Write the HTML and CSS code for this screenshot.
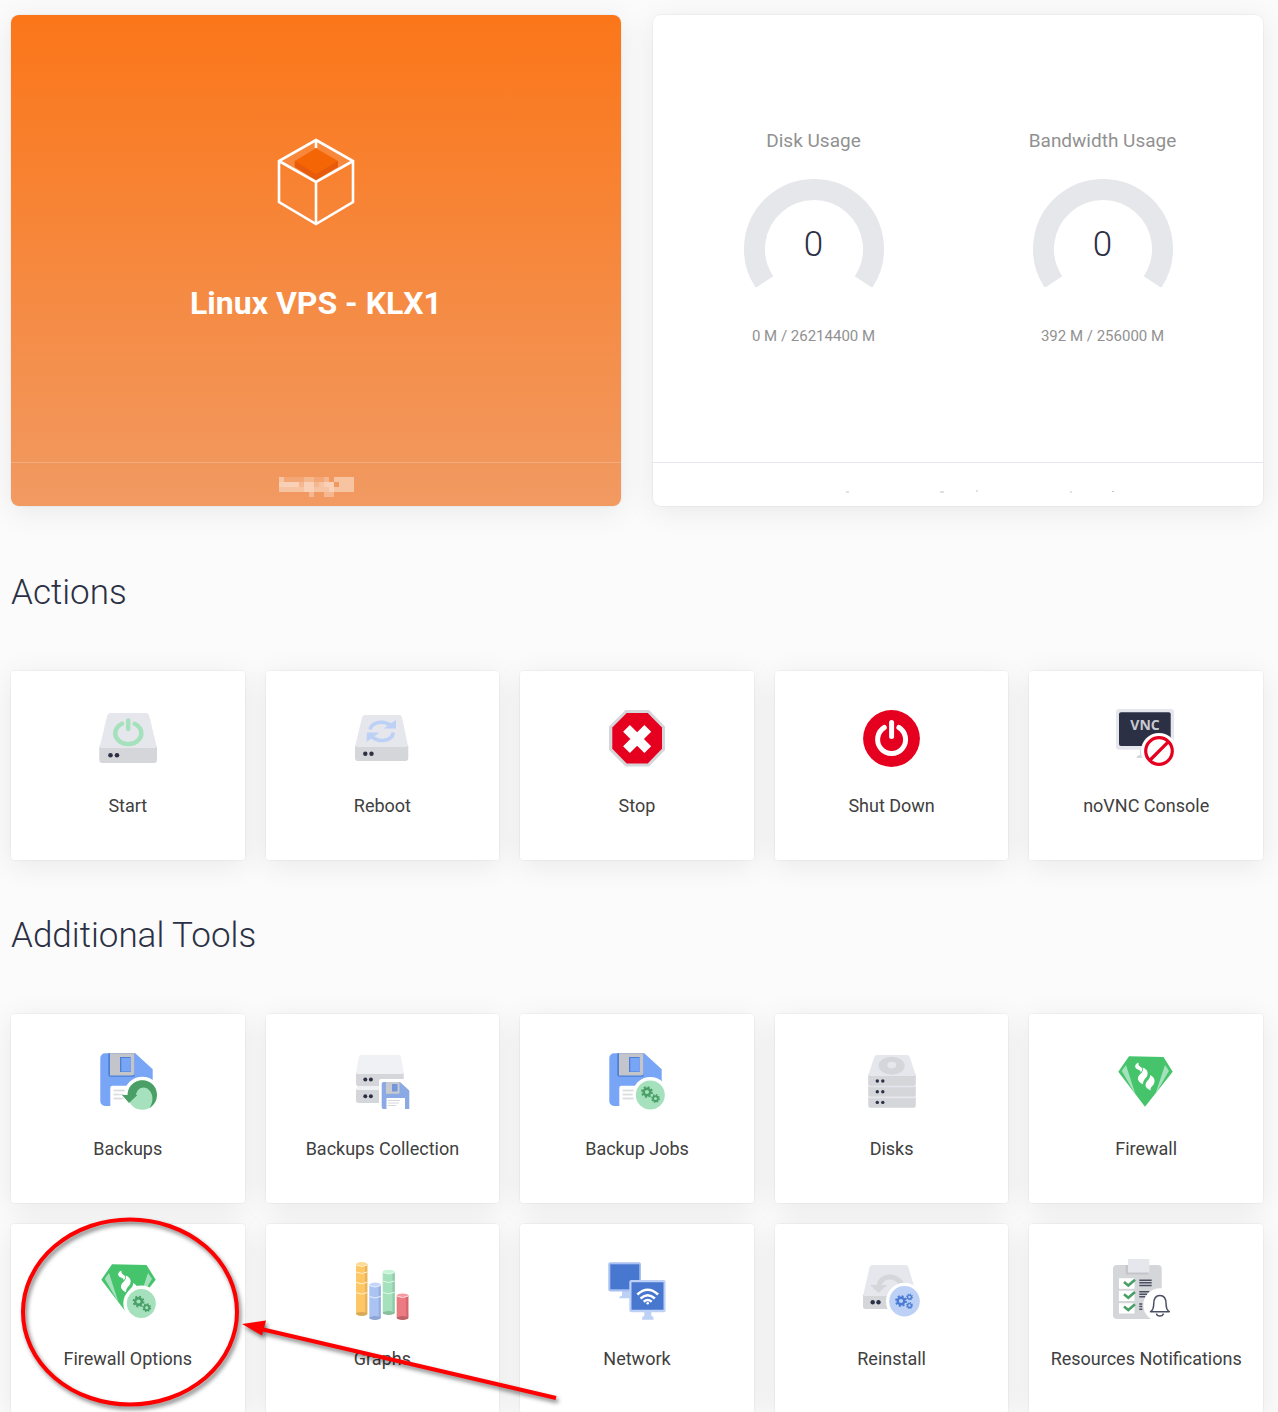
FILE: index.html
```
<!DOCTYPE html>
<html lang="en">
<head>
    <meta charset="utf-8">
    <meta name="viewport" content="width=device-width, initial-scale=1">
    <title>Linux VPS - KLX1</title>
    <link rel="stylesheet" href="styles.css">
</head>
<body>
    <!-- shared icon parts -->
    <svg class="defs" width="0" height="0" aria-hidden="true">
        <symbol id="gear" viewBox="-6 -6 12 12" overflow="visible">
            <circle r="3.3" fill="none" stroke="currentColor" stroke-width="2.4"/>
            <circle r="5" fill="none" stroke="currentColor" stroke-width="1.8" stroke-dasharray="2 1.927"/>
        </symbol>
        <symbol id="floppy" viewBox="0 0 64 64">
            <path fill="#78a5f6" d="M9 4.300h30.300l17.400 16V57H9a4.700 4.700 0 0 1-4.700-4.700V9A4.700 4.700 0 0 1 9 4.300z"/>
            <path fill="#4d7fd6" d="M12.300 4.300h26v23.400h-24a2 2 0 0 1-2-2z"/>
            <path fill="#c4c5cb" d="M14 4.300h24.300V24a2.500 2.500 0 0 1-2.500 2.500H14z"/>
            <path fill="#4d7fd6" d="M24 8h10.700v15H24z"/>
            <path fill="#78a5f6" d="M25.300 9h9.400v13.500h-9.400z"/>
            <path fill="#fff" d="M16.300 36.700H60V60H14.300V38.700a2 2 0 0 1 2-2z"/>
            <path stroke="#dcdde0" stroke-width="1.400" d="M17.700 41.500h12M17.700 45.500h10M17.700 49.500h10"/>
        </symbol>
        <symbol id="diamond" viewBox="0 0 64 64">
            <path fill="#45c46c" d="M15 7.300L49.500 8l9.200 14.700L31 57.700 4.300 22.700z"/>
            <path fill="#a5e1bc" d="M12 16l-4.300 5.700L21.700 46zM51 16l4 5.700L41 46z"/>
            <g fill="#fff">
                <path d="M24.500 13.500c-4.500 2-4.500 6 .5 7.500 1.500.5 1.800 1.500 1.500 2.500 3-3 1.500-5-.5-6-2-1.200-1.500-2.500-1.500-4z"/>
                <path d="M28.500 18.500c1.500 3-1 5.500-3.500 8-2.500 3.200-.5 6.800 4 8.800 0-2.300.5-3.800 2.500-6 3.500-3.500 3-9-3-10.800z"/>
                <path d="M36 26c.5 2.500-1 4-3 6.200-2 2.400-2 5 0 7 1.500 1 2.600 1.500 3.500 2.300-.2-2 .4-3 1.800-4.500 4-4 2.500-9-2.300-11z"/>
            </g>
        </symbol>
    </svg>

    <main class="page">
        <section class="overview">
            <div class="card card-product">
                <div class="card-body">
                    <svg class="cube" viewBox="0 0 80 90" aria-hidden="true">
                        <path fill="#fff" fill-opacity=".06" d="M40 3l38 21-38 20.700L4 24z"/>
                        <path fill="#e85a0c" d="M18.700 24v6L40 43.300 62 30v-6z"/>
                        <path fill="#f46506" d="M40 11.300L62 24 40 37.300 18.700 24z"/>
                        <path fill="none" stroke="#fff" stroke-width="2.600" d="M40 3l37 21v41L40 87 3 65V24zM3 24l37 21 37-21M40 45v42M40 3v8"/>
                    </svg>
                    <h1>Linux VPS - KLX1</h1>
                </div>
                <div class="card-footer">
                    <svg class="masked-name" viewBox="0 0 75 20" role="img" aria-label="Hidden host name">
                        <g fill="#fff">
                            <path fill-opacity=".15" d="M5 0h20v5H5zM35 0h5v5h-5zM40 0h5v5h-5z"/>
                            <path fill-opacity=".3" d="M25 0h10v5H25zM20 5h5v5h-5zM35 5h5v5h-5zM30 15h5v5h-5zM45 15h10v5H45zM45 0h5v5h-5z"/>
                            <path fill-opacity=".42" d="M0 0h5v5H0zM55 0h20v5H55zM60 5h15v5H60zM0 10h25v5H0zM35 10h15v5H35zM55 10h20v5H55zM40 5h5v5h-5z"/>
                            <path fill-opacity=".55" d="M0 5h20v5H0zM25 5h10v5H25zM45 5h10v5H45zM25 10h10v5H25zM50 10h5v5h-5z"/>
                        </g>
                    </svg>
                </div>
            </div>

            <div class="card card-usage">
                <div class="card-body">
                    <div class="usage">
                        <h3>Disk Usage</h3>
                        <div class="gauge">
                            <svg viewBox="0 0 140 108" aria-hidden="true"><path d="M20.500 103A59.500 59.500 0 1 1 119.500 103"/></svg>
                            <span>0</span>
                        </div>
                        <p>0 M / 26214400 M</p>
                    </div>
                    <div class="usage">
                        <h3>Bandwidth Usage</h3>
                        <div class="gauge">
                            <svg viewBox="0 0 140 108" aria-hidden="true"><path d="M20.500 103A59.500 59.500 0 1 1 119.500 103"/></svg>
                            <span>0</span>
                        </div>
                        <p>392 M / 256000 M</p>
                    </div>
                </div>
                <div class="card-footer">
                    <svg class="masked-date" viewBox="0 0 270 4" aria-hidden="true">
                        <path stroke="#c4c4c4" d="M1 2h3M95 2h4M131 1h2M225 2h2M267 1.500h2"/>
                    </svg>
                </div>
            </div>
        </section>

        <h2>Actions</h2>
        <section class="tiles">
            <a class="tile" href="#start">
                <svg viewBox="0 0 64 64" aria-hidden="true">
                    <path fill="#e6e7ec" d="M14.500 7h35.500q2.500 0 3.200 2.500L61 42H3.300l8-32.500Q12 7 14.500 7z"/>
                    <path fill="#d5d6da" d="M3.300 40.500q1 1.500 2.500 1.500h52.700q1.500 0 2.500-1.500V54a3 3 0 0 1-3 3H6.300a3 3 0 0 1-3-3z"/>
                    <circle cx="14.500" cy="49.200" r="2.300" fill="#2b3044"/><circle cx="21" cy="49.200" r="2.300" fill="#2b3044"/>
                    <path fill="none" stroke="#a5e1bc" stroke-width="4.500" stroke-linecap="round" d="M26 17.800a13 10.800 0 1 0 12.600 0M32.200 14.500v8.500"/>
                </svg>
                <span>Start</span>
            </a>
            <a class="tile" href="#reboot">
                <svg viewBox="0 0 64 64" aria-hidden="true">
                    <path fill="#e6e7ec" d="M15 9h34q2.400 0 3 2.400l6.300 29.600H5l7-29.600Q12.600 9 15 9z"/>
                    <path fill="#d5d6da" d="M5 39.500q1 1.500 2.500 1.500h48.300q1.500 0 2.500-1.500V52a3 3 0 0 1-3 3H8a3 3 0 0 1-3-3z"/>
                    <circle cx="15.300" cy="47.700" r="2.200" fill="#2b3044"/><circle cx="21.500" cy="47.700" r="2.200" fill="#2b3044"/>
                    <path fill="none" stroke="#bdd0f5" stroke-width="3.600" d="M20 23.500c2-8 14-9.500 21-4M43.500 26.500c-2 9-14 10.500-22 4"/>
                    <path fill="#bdd0f5" d="M46 14v8.500H33.500zM17 26.500h12.500L16.500 36z"/>
                </svg>
                <span>Reboot</span>
            </a>
            <a class="tile" href="#stop">
                <svg viewBox="0 0 64 64" aria-hidden="true">
                    <path fill="#d5d6da" d="M20.500 4h23.500L60 20.500v23.500L44 60.500H20.500L4 44V20.500z"/>
                    <path fill="#e5001f" d="M21.700 7h21L57 21.500v21.300L42.700 57.500h-21L7.300 42.800V21.500z"/>
                    <path stroke="#fff" stroke-width="9.600" d="M21.500 22.300l21.300 21.300M42.800 22.300L21.500 43.600"/>
                </svg>
                <span>Stop</span>
            </a>
            <a class="tile" href="#shutdown">
                <svg viewBox="0 0 64 64" aria-hidden="true">
                    <circle cx="31.500" cy="32.500" r="28.400" fill="#e5001f"/>
                    <path fill="none" stroke="#fff" stroke-width="5" stroke-linecap="round" d="M24.300 21.500a14 14 0 1 0 14.600 0M31.600 16.500v14"/>
                </svg>
                <span>Shut Down</span>
            </a>
            <a class="tile" href="#novnc">
                <svg viewBox="0 0 64 64" aria-hidden="true">
                    <path fill="#d5d6da" d="M26 43h8v9H22.500q0-2.500 3.500-3z"/>
                    <rect x="2" y="3" width="58" height="40.700" rx="3" fill="#e6e7ec"/>
                    <rect x="5" y="6.300" width="51.700" height="33.700" rx="2" fill="#2b3044"/>
                    <text class="vnc" x="31" y="24" text-anchor="middle">VNC</text>
                    <circle cx="45" cy="45" r="18" fill="#fff"/>
                    <path fill="none" stroke="#e5001f" stroke-width="3.200" d="M58.300 45a13.300 13.300 0 1 1-26.600 0 13.300 13.300 0 1 1 26.600 0zM35.700 54.500L54.500 35.700"/>
                </svg>
                <span>noVNC Console</span>
            </a>
        </section>

        <h2>Additional Tools</h2>
        <section class="tiles tools">
            <a class="tile" href="#backups">
                <svg viewBox="0 0 64 64" aria-hidden="true">
                    <use href="#floppy" width="64" height="64"/>
                    <circle cx="46.300" cy="46" r="18.300" fill="#fff"/>
                    <path stroke="#dcdde0" stroke-width="1.400" d="M17.700 41.500h11M17.700 45.500h4M17.700 49.500h8"/>
                    <circle cx="46.300" cy="46" r="14.700" fill="#a5e1bc"/>
                    <path fill="#4a9f67" d="M31.600 46a14.700 14.700 0 1 1 22 12.700C60 50 55 38.500 47.500 38.500c-4 0-7 3.500-7.500 7.500h1.500L33 54l-7-8z"/>
                </svg>
                <span>Backups</span>
            </a>
            <a class="tile" href="#backups-collection">
                <svg viewBox="0 0 64 64" aria-hidden="true">
                    <path fill="#f0f1f5" d="M11.500 6H48.500q2.200 0 2.700 2.200l2.500 15.800-1.500 2H7.500l-1.500-2L8.800 8.200Q9.300 6 11.500 6z"/>
                    <path fill="#f0f1f5" d="M7 35h46v8H7z"/>
                    <path fill="#d5d6da" d="M6 23.500q.5 1.500 2 1.500h43.700q1.500 0 2-1.500V37H8.500A2.500 2.500 0 0 1 6 34.500zM6 39.500q.5 1.500 2 1.500h43V54H8.500A2.500 2.500 0 0 1 6 51.500z"/>
                    <g fill="#2b3044"><circle cx="15.300" cy="30.600" r="2"/><circle cx="20.900" cy="30.600" r="2"/><circle cx="15.300" cy="47.200" r="2"/><circle cx="20.900" cy="47.200" r="2"/></g>
                    <path fill="#fff" d="M31 30h33v34H29V32a2 2 0 0 1 2-2z"/>
                    <path fill="#8ba9e3" d="M33.500 33h16.500l9.300 8.500V60H33.500a1.800 1.800 0 0 1-1.800-1.800V34.800A1.800 1.800 0 0 1 33.500 33z"/>
                    <path fill="#c9cad0" d="M36 33h13.500v10.500q0 1.200-1.200 1.200H36z"/>
                    <path fill="#7497dc" d="M42 35h5.500v7.500H42z"/>
                    <path fill="#fff" d="M36.500 49h18.500v11.500H36.500z"/>
                    <path stroke="#d5d6da" d="M38 51.500h12M38 54h11M38 56.500h8"/>
                </svg>
                <span>Backups Collection</span>
            </a>
            <a class="tile" href="#backup-jobs">
                <svg class="green" viewBox="0 0 64 64" aria-hidden="true">
                    <use href="#floppy" width="64" height="64"/>
                    <circle cx="45.300" cy="46" r="18" fill="#fff"/>
                    <path stroke="#dcdde0" stroke-width="1.400" d="M17.700 41.500h11M17.700 45.500h10M17.700 49.500h11"/>
                    <circle cx="45.300" cy="46" r="14.500" fill="#a5e1bc"/>
                    <use href="#gear" x="36" y="37" width="12" height="12"/>
                    <use href="#gear" x="46" y="45" width="9" height="9"/>
                </svg>
                <span>Backup Jobs</span>
            </a>
            <a class="tile" href="#disks">
                <svg viewBox="0 0 64 64" aria-hidden="true">
                    <path fill="#e6e7ec" d="M17 6h30q2 0 2.700 2L55.700 26v31H8.300V26l6-18q.700-2 2.700-2z"/>
                    <ellipse cx="31.700" cy="16.700" rx="13" ry="9" fill="#d5d6da"/>
                    <ellipse cx="31.700" cy="16" rx="4.400" ry="3.200" fill="#e6e7ec"/>
                    <path fill="#d5d6da" d="M8.300 25.500q.5 1.500 2 1.500h43.400q1.500 0 2-1.500v9.200a2 2 0 0 1-2 2H10.300a2 2 0 0 1-2-2zM8.300 37q.5 1.300 2 1.300h43.400q1.500 0 2-1.300v8.500a2 2 0 0 1-2 2H10.300a2 2 0 0 1-2-2zM8.300 48q.5 1.300 2 1.300h43.400q1.500 0 2-1.300v8.700a2 2 0 0 1-2 2H10.300a2 2 0 0 1-2-2z"/>
                    <g fill="#2b3044"><circle cx="17.300" cy="32" r="1.700"/><circle cx="22.800" cy="32" r="1.700"/><circle cx="17.300" cy="42.700" r="1.700"/><circle cx="22.800" cy="42.700" r="1.700"/><circle cx="17.300" cy="53.400" r="1.700"/><circle cx="22.800" cy="53.400" r="1.700"/></g>
                </svg>
                <span>Disks</span>
            </a>
            <a class="tile" href="#firewall">
                <svg viewBox="0 0 64 64" aria-hidden="true">
                    <use href="#diamond" width="64" height="64"/>
                </svg>
                <span>Firewall</span>
            </a>
            <a class="tile" href="#firewall-options">
                <svg class="green" viewBox="0 0 64 64" aria-hidden="true">
                    <use href="#diamond" x="1" y="-2" width="64" height="64"/>
                    <circle cx="45.300" cy="44.500" r="18" fill="#fff"/>
                    <circle cx="45.300" cy="44.500" r="14.500" fill="#a5e1bc"/>
                    <use href="#gear" x="36.500" y="36.500" width="12" height="12"/>
                    <use href="#gear" x="46.200" y="44.200" width="9" height="9"/>
                </svg>
                <span>Firewall Options</span>
            </a>
            <a class="tile" href="#graphs">
                <svg viewBox="0 0 64 64" aria-hidden="true">
                    <!-- yellow -->
                    <path fill="#fdc766" d="M6 5h11.300v50q-5.600 3.500-11.300 0z"/>
                    <path fill="#e9b55c" d="M15 5h2.300v50l-2.300 1z"/>
                    <ellipse cx="11.700" cy="54.800" rx="5.600" ry="1.900" fill="#d6a857"/>
                    <ellipse cx="11.700" cy="5.200" rx="5.600" ry="2.100" fill="#fed98f"/>
                    <path fill="none" stroke="#fff0cf" d="M6 6q5.700 3 11.300 0M6 13q5.700 3 11.300 0M6 23.300q5.700 3 11.300 0M6 33.600q5.700 3 11.300 0"/>
                    <!-- blue -->
                    <path fill="#abc3f2" d="M19.300 26h11.400v33q-5.700 3.300-11.400 0z"/>
                    <path fill="#94addd" d="M28.700 26h2v33l-2 1z"/>
                    <ellipse cx="25" cy="59" rx="5.700" ry="1.900" fill="#8fa6d4"/>
                    <ellipse cx="25" cy="25.700" rx="5.700" ry="2.100" fill="#c5d5f8"/>
                    <path fill="none" stroke="#e8effd" d="M19.300 26.500q5.700 3 11.400 0M19.300 37.500q5.700 3 11.400 0"/>
                    <!-- green -->
                    <path fill="#a5e1bc" d="M32.700 13h12v41q-6 3.500-12 0z"/>
                    <path fill="#8ecba6" d="M42.500 13h2.200v41l-2.200 1z"/>
                    <ellipse cx="38.700" cy="54" rx="6" ry="1.900" fill="#8abf9d"/>
                    <ellipse cx="38.700" cy="12.800" rx="6" ry="2.100" fill="#c5f5d8"/>
                    <path fill="none" stroke="#e0f8e9" d="M32.700 13.500q6 3 12 0M32.700 22q6 3 12 0M32.700 33.300q6 3 12 0"/>
                    <!-- red -->
                    <path fill="#ec7b81" d="M46.700 36.500h11.600V59q-5.800 3.300-11.600 0z"/>
                    <path fill="#d2676d" d="M56.200 36.500h2.100V59l-2.100 1z"/>
                    <ellipse cx="52.500" cy="59" rx="5.800" ry="1.900" fill="#bf6268"/>
                    <ellipse cx="52.500" cy="36.500" rx="5.800" ry="2.100" fill="#f59ca1"/>
                    <path fill="none" stroke="#fbd9db" d="M46.700 37q5.800 3 11.600 0"/>
                </svg>
                <span>Graphs</span>
            </a>
            <a class="tile" href="#network">
                <svg viewBox="0 0 64 64" aria-hidden="true">
                    <path fill="#bdd0f5" d="M17 32h9v7.300H14.300q0-2.300 2.700-2.500zM39.300 53h7v4q2.400.3 2.400 3.700H37q0-3.400 2.300-3.700z"/>
                    <rect x="3.300" y="3.300" width="32.700" height="29.200" rx="2" fill="#a9c1f2"/>
                    <path fill="#4877d0" d="M5.300 5.300h29v25h-29z"/>
                    <rect x="24.300" y="21" width="36.300" height="32.300" rx="2" fill="#bdd0f5"/>
                    <path fill="#4877d0" d="M26.500 23.200h32v27.500h-32z"/>
                    <path fill="none" stroke="#fff" stroke-width="2.500" d="M32.300 35.500q10.400-9.500 20.800 0M35.500 39.500q7.200-6.500 14.400 0M38.700 42.700q4-3.500 8 0"/>
                    <circle cx="42.700" cy="44.200" r="1.300" fill="#fff"/>
                </svg>
                <span>Network</span>
            </a>
            <a class="tile" href="#reinstall">
                <svg class="blue" viewBox="0 0 64 64" aria-hidden="true">
                    <path fill="#e6e7ec" d="M12.500 6h33q2.200 0 2.900 2.300L57 37H3L9.600 8.300Q10.300 6 12.500 6z"/>
                    <path fill="#d5d6da" d="M3 35.500q1 1.500 2.500 1.500H57v13H5.500A2.500 2.500 0 0 1 3 47.500z"/>
                    <circle cx="12.700" cy="43.300" r="2.200" fill="#2b3044"/><circle cx="18.500" cy="43.300" r="2.200" fill="#2b3044"/>
                    <path fill="none" stroke="#d5d6da" stroke-width="5" d="M19 28c0-14 23-14 25 4"/>
                    <path fill="#d5d6da" d="M10.300 26h17L18.500 34z"/>
                    <circle cx="44.500" cy="42.300" r="18.500" fill="#fff"/>
                    <circle cx="44.500" cy="42.300" r="15.300" fill="#bdd0f5"/>
                    <use href="#gear" x="35" y="36" width="12" height="12"/>
                    <use href="#gear" x="46" y="34.500" width="7" height="7"/>
                    <use href="#gear" x="46" y="43" width="7" height="7"/>
                </svg>
                <span>Reinstall</span>
            </a>
            <a class="tile" href="#notifications">
                <svg viewBox="0 0 64 64" aria-hidden="true">
                    <rect x="-1" y="6" width="48.700" height="54" rx="4" fill="#d5d6da"/>
                    <path fill="#c4c5cb" d="M11.700 6h22.600v9.500H11.700z"/>
                    <path fill="#e6e7ec" d="M14 0h21.300v13.500H14z"/>
                    <path fill="#fff" d="M5 19.300h15.500v10.400H5zM5 31.700h15.500v10.400H5zM5 44.200h15.500v10.400H5z"/>
                    <path fill="none" stroke="#4a9f67" stroke-width="2.600" d="M10 23l4.300 3.500L21 20.700M10 35.200l4.300 3.500L21 33M10 47.600l4.300 3.500L21 45.300"/>
                    <path stroke="#4a5062" stroke-width="1.500" d="M25.300 21.300h12.400M25.300 23.800h12.400M25.300 26.400h12.400M25.300 32.700h10M25.300 35.200h8M25.300 37.700h6M25.300 45h3M25.300 47.600h3M25.300 50.200h3"/>
                    <circle cx="46" cy="46" r="16.700" fill="#fff"/>
                    <path fill="none" stroke="#4a5062" stroke-width="1.500" stroke-linejoin="round" d="M36.500 52.700c2.700-1.500 3.200-3.500 3.200-7.700 0-5.500 2.300-8.500 6.200-8.500s6.200 3 6.200 8.500c0 4.200.5 6.200 3.200 7.700zM42.500 54.500c.5 3.400 6.300 3.400 6.800 0"/>
                </svg>
                <span>Resources Notifications</span>
            </a>

            <!-- marker around Firewall Options -->
            <svg class="marker" viewBox="0 0 560 210" aria-hidden="true">
                <g stroke="#fe0000" fill="none" stroke-width="4">
                    <ellipse cx="119" cy="98" rx="107" ry="92.500"/>
                    <path d="M250 115l295 69"/>
                </g>
                <path fill="#fe0000" d="M231 110l24-3.500-4 15z"/>
            </svg>
        </section>
    </main>
</body>
</html>
```

FILE: styles.css
```
* {
    box-sizing: border-box;
}

body {
    margin: 0;
    height: 100vh;
    overflow: hidden;
    background-color: #fbfbfb;
    color: #404040;
    font-family: Roboto, "Liberation Sans", sans-serif;
}

h1, h2, h3, p {
    margin: 0;
}

.defs {
    position: absolute;
}

.page {
    padding: 15px 15px 0 11px;
}

/* top cards */
.overview {
    display: grid;
    grid-template-columns: 1fr 1fr;
    gap: 32px;
}

.card {
    display: flex;
    flex-direction: column;
    min-height: 491px;
    border-radius: 8px;
    box-shadow: 0 0 0 1px rgba(0, 0, 0, 0.03), 0 5px 30px rgba(0, 0, 0, 0.08);
}

.card-product {
    background: linear-gradient(#fb7619, #f19a62);
    color: #fff;
}

.card-usage {
    background-color: #fff;
}

.card-body {
    flex: 1;
}

.card-product .card-body {
    display: flex;
    flex-direction: column;
    align-items: center;
    padding-top: 122px;
}

.cube {
    width: 80px;
    height: 90px;
}

h1 {
    margin-top: 56px;
    font-size: 32px;
    line-height: 40px;
    font-weight: 700;
}

.card-footer {
    height: 44px;
    display: flex;
    align-items: center;
    justify-content: center;
    border-top: 1px solid #e6e7ec;
}

.card-product .card-footer {
    padding-top: 4px;
    border-color: rgba(255, 255, 255, 0.2);
}

.masked-name {
    width: 75px;
    height: 20px;
}

.masked-date {
    width: 270px;
    height: 4px;
    margin: 14px 0 0 44px;
}

.card-usage .card-body {
    display: grid;
    grid-template-columns: 1fr 1fr;
    align-content: start;
    padding: 114px 16px 0;
}

.usage {
    text-align: center;
    color: #919191;
}

h3 {
    font-size: 19px;
    line-height: 24px;
    font-weight: 400;
}

.gauge {
    display: grid;
    justify-content: center;
    margin-top: 26px;
}

.gauge svg,
.gauge span {
    grid-area: 1 / 1;
}

.gauge svg {
    width: 140px;
    height: 108px;
}

.gauge path {
    fill: none;
    stroke: #e6e7eb;
    stroke-width: 21;
}

.gauge span {
    padding-top: 46px;
    color: #2b3044;
    font-size: 35px;
    line-height: 40px;
    font-weight: 300;
}

.usage p {
    margin-top: 39px;
    font-size: 15px;
    line-height: 20px;
}

/* tiles */
h2 {
    padding: 64px 0 55px;
    color: #2b3044;
    font-size: 35px;
    line-height: 46px;
    font-weight: 300;
}

.tiles {
    position: relative;
    isolation: isolate;
    display: grid;
    grid-template-columns: repeat(5, 1fr);
    gap: 21px;
}

.tiles + h2 {
    padding-top: 53px;
}

.tile {
    position: relative;
    display: flex;
    flex-direction: column;
    align-items: center;
    height: 189px;
    padding-top: 35px;
    border-radius: 4px;
    background-color: #fff;
    color: inherit;
    font-size: 18px;
    line-height: 24px;
    text-decoration: none;
}

/* shadow sits below the neighbouring tiles */
.tile::before {
    content: "";
    position: absolute;
    inset: 0;
    z-index: -1;
    border-radius: 4px;
    box-shadow: 0 0 0 1px rgba(0, 0, 0, 0.03), 0 5px 30px rgba(0, 0, 0, 0.08);
}

.tile svg {
    width: 64px;
    height: 64px;
    overflow: visible;
}

.tile span {
    margin-top: 24px;
}

.green {
    color: #4a9f67;
}

.blue {
    color: #4a7bd4;
}

.vnc {
    fill: #c9cad0;
    font-family: "Open Sans", sans-serif;
    font-size: 14px;
    font-weight: 700;
}

.marker {
    position: absolute;
    left: 0;
    top: 200px;
    width: 560px;
    height: 210px;
    pointer-events: none;
    filter: drop-shadow(2px 3px 2px rgba(0, 0, 0, 0.5));
}
```
